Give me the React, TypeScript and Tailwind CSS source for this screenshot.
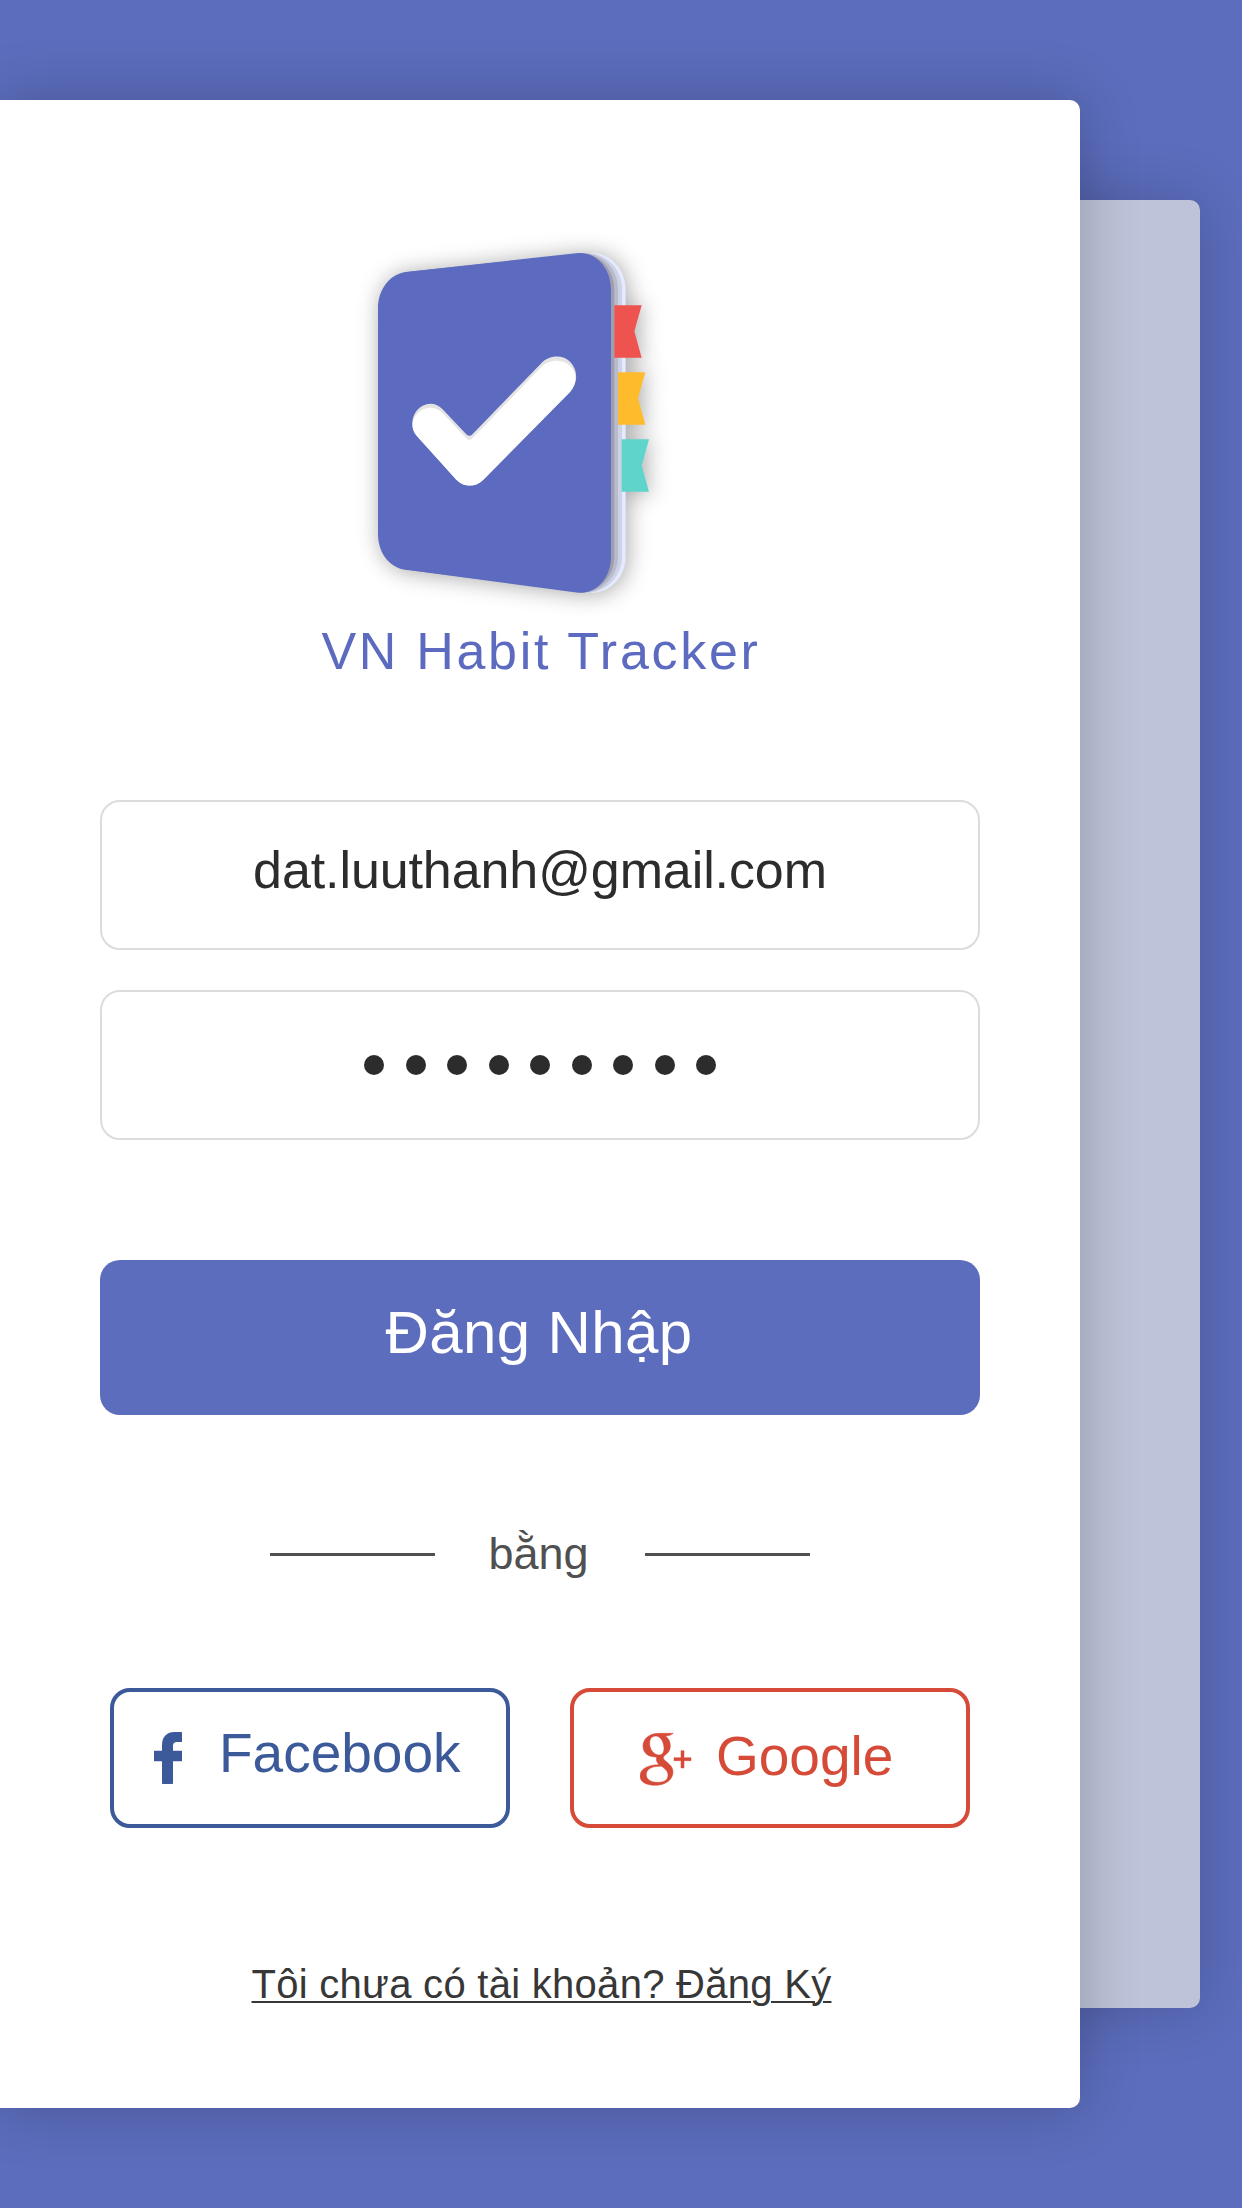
import React from "react";

function BookLogo() {
  return (
    <svg
      className="ml-[360px] mt-[130px] h-[380px] w-[310px] shrink-0 overflow-visible"
      viewBox="0 0 930 1140"
    >
      <g className="drop-shadow-[6px_4px_34px_rgba(0,0,0,0.34)]">
        <path
          fill="#e4eaff"
          d="M145 125L700 69C755 72 797 120 797 180V980C797 1036 755 1086 700 1088L150 1021Z"
        />
        <path fill="#ced2e5" d="M145 125L690 70C747 76 786 122 786 180V980C786 1034 745 1082 690 1087L150 1021Z" />
        <path fill="#b8bbcc" d="M145 125L682 70C738 78 774 122 774 180V980C774 1034 735 1080 682 1087L150 1021Z" />
        <path fill="#9d9eaf" d="M145 125L672 70C725 78 763 122 763 180V980C763 1034 722 1082 672 1087L150 1021Z" />
        <path
          fill="#5c6abf"
          d="M145 125L655 69C710 67 753 115 753 180V980C753 1042 710 1092 655 1088L150 1021C96 1020 54 975 54 912V235C54 175 94 127 145 125Z"
        />
        <path fill="#ef5350" d="M763 226H845L823 304L845 383H763Z" />
        <path fill="#febc2c" d="M774 427H856L834 505L856 584H774Z" />
        <path fill="#5fd4ca" d="M785 628H867L845 707L867 785H785Z" />
      </g>
      <path
        fill="#e4e4e4"
        d="M170 617C152 597 153 562 171 541C192 516 225 515 247 537L316 610Q327 624 338 612L541 403C565 375 607 372 631 396C654 420 655 458 630 486L370 749C347 773 311 772 289 749Z"
      />
      <path
        fill="#fff"
        d="M170 617C153 597 153 572 171 552C192 528 225 527 247 548L316 622Q327 636 338 624L541 414C565 387 607 385 631 408C650 428 653 460 630 486L370 749C347 773 311 772 289 749Z"
      />
    </svg>
  );
}

function FacebookIcon() {
  return (
    <svg className="ml-10 mt-10 h-[52px] w-7 shrink-0" viewBox="0 0 84 156" fill="#3c5a9a">
      <path d="M24 156V88H2Q0 88 0 86V58Q0 56 2 56H24V40C24 14 38 0 62 0H82Q84 0 84 2V28Q84 30 82 30H70C60 30 57 35 57 43V56H82Q84 56 84 58V86Q84 88 82 88H57V154Q57 156 55 156H26Q24 156 24 154Z" />
    </svg>
  );
}

function GooglePlusIcon() {
  return (
    <svg className="ml-[66px] mt-10 h-[54px] w-[52px] shrink-0" viewBox="300 188 156 162" fill="#d64a38" stroke="#d64a38" strokeWidth="1.5">
      <path
        fillRule="evenodd"
        d="M400 192H355C328 193 309 208 309 230C309 252 326 264 350 263C347 272 351 280 357 286C325 286 300 298 300 320C300 338 320 348 345 348C378 348 399 330 399 308C399 292 388 284 376 274C368 268 368 262 377 256C386 249 391 242 391 230C391 216 385 206 376 200C386 200 394 197 400 192ZM347 200C335 200 329 209 329 222C329 240 341 257 357 257C368 257 372 248 372 237C372 220 363 200 347 200ZM357 291C335 291 319 300 319 316C319 330 332 339 353 339C374 339 384 331 384 318C384 305 374 298 365 291Z"
      />
      <path d="M423 244H432V265H453V274H432V296H423V274H402V265H423Z" />
    </svg>
  );
}

export default function App() {
  return (
    <div className="relative h-[2208px] w-[1242px] overflow-hidden bg-[#5c6dbd] pt-[100px] font-['Liberation_Sans',Arial,sans-serif]">
      <div className="absolute top-[200px] left-0 h-[1808px] w-[1200px] rounded-[10px] bg-[#bec3d9] shadow-[0_0_60px_rgba(0,0,0,0.2)]" />
      <main className="relative flex h-[2008px] w-[1080px] flex-col rounded-r-[10px] bg-white shadow-[0_0_60px_rgba(0,0,0,0.23)]">
        <BookLogo />
        <h1 className="mt-[11px] pl-[2px] text-center text-[52px] leading-[60px] tracking-[2.7px] text-[#5c6abf]">
          VN Habit Tracker
        </h1>

        <form className="mx-[100px] mt-[119px] flex flex-col">
          <div className="h-[150px] rounded-[20px] border-2 border-[#dcdcdc] pt-[38px] text-center text-[52px] leading-[60px] tracking-[-0.1px] text-[#2c2c2c]">
            dat.luuthanh@gmail.com
          </div>
          <div className="mt-10 flex h-[150px] items-center justify-center gap-[21.5px] rounded-[20px] border-2 border-[#dcdcdc]">
            {Array.from({ length: 9 }, (_, i) => (
              <span key={i} className="size-5 rounded-full bg-[#2c2c2c]" />
            ))}
          </div>
          <button
            type="button"
            className="mt-[120px] flex h-[155px] justify-center rounded-[20px] bg-[#5c6dbd] pt-[38px] pr-[2px] text-[60px] leading-[70px] tracking-[0.4px] text-white"
          >
            Đăng Nhập
          </button>
        </form>

        <div className="mt-28 flex h-[50px] items-center justify-center">
          <span className="mt-[5px] h-[3px] w-[165px] bg-[#505050]" />
          <span className="w-[210px] pt-[3px] pr-[3px] text-center text-[45px] leading-[50px] text-[#505050]">
            bằng
          </span>
          <span className="mt-[5px] h-[3px] w-[165px] bg-[#505050]" />
        </div>

        <div className="mx-[110px] mt-[111px] flex justify-between">
          <button
            type="button"
            className="flex h-[140px] w-[400px] items-start rounded-[20px] border-4 border-[#3c5a9a] text-[55px] leading-[60px] text-[#3c5a9a]"
          >
            <FacebookIcon />
            <span className="ml-[37px] mt-[31px]">Facebook</span>
          </button>
          <button
            type="button"
            className="flex h-[140px] w-[400px] items-start rounded-[20px] border-4 border-[#d64a38] text-[55px] leading-[60px] text-[#d64a38]"
          >
            <GooglePlusIcon />
            <span className="ml-6 mt-[34px]">Google</span>
          </button>
        </div>

        <a className="mt-[131px] pl-[3px] text-center text-[40px] leading-[50px] tracking-[0.28px] text-[#373737] underline decoration-2 underline-offset-[3px]">
          Tôi chưa có tài khoản? Đăng Ký
        </a>
      </main>
    </div>
  );
}
